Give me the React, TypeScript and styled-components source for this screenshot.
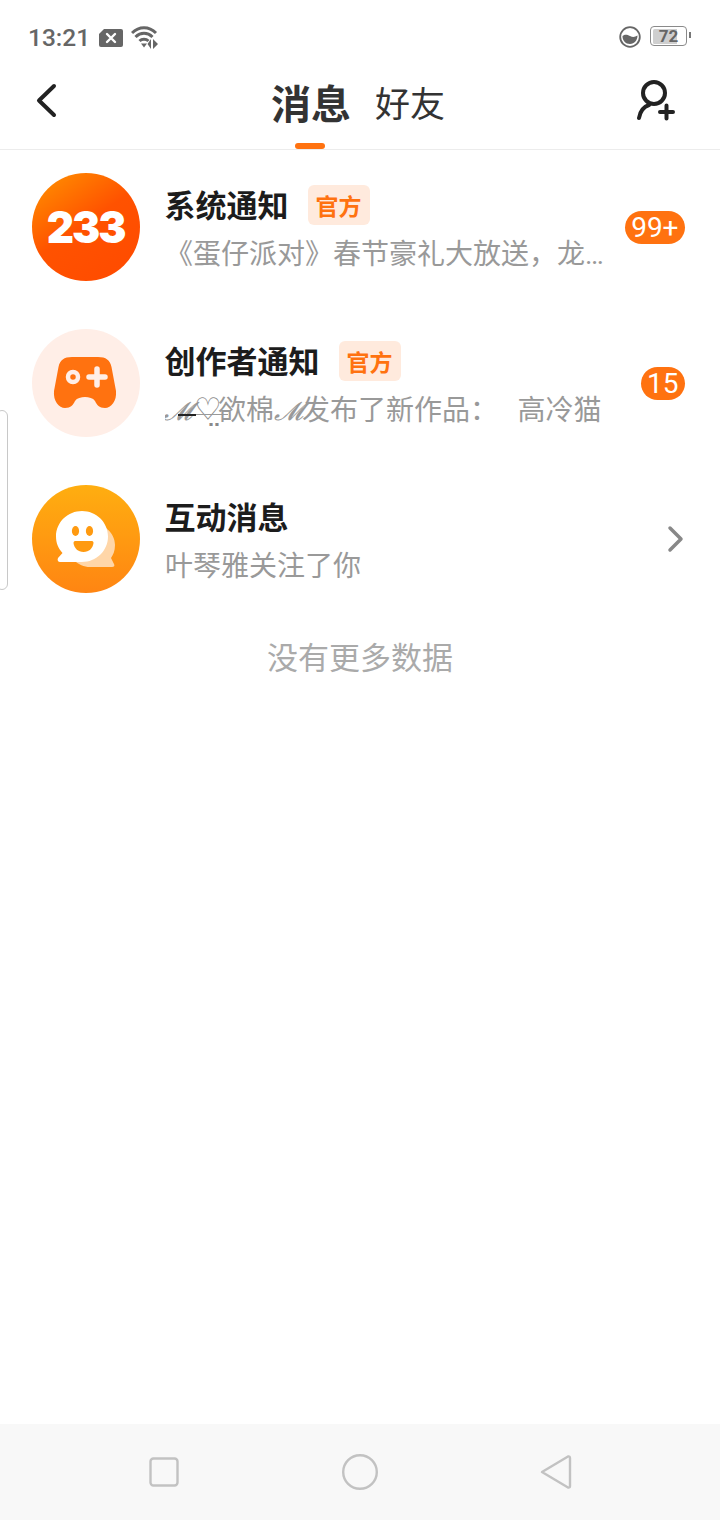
import styled, { createGlobalStyle } from "styled-components";

const orange = "#ff7210";
const cjk = `"Noto Sans CJK SC", "Noto Sans", sans-serif`;

const GlobalStyle = createGlobalStyle`
    html, body {
        margin: 0;
        padding: 0;
        background: #fff;
    }
    * {
        box-sizing: border-box;
    }
`;

const Page = styled.div`
    position: relative;
    display: flex;
    flex-direction: column;
    width: 720px;
    height: 1520px;
    overflow: hidden;
    background: #fff;
    font-family: ${cjk};
`;

const StatusBar = styled.div`
    display: flex;
    align-items: center;
    justify-content: space-between;
    height: 72px;
    padding: 3px 33px 0 28px;
    color: #666;
`;

const StatusGroup = styled.div`
    display: flex;
    align-items: center;
`;

const Clock = styled.span`
    font-family: Roboto, sans-serif;
    font-size: 24.500px;
    font-weight: 500;
    margin-right: 9px;
`;

const Battery = styled.div`
    position: relative;
    display: flex;
    align-items: center;
    justify-content: center;
    width: 37px;
    height: 20px;
    margin: -3px 0 0 9px;
    border: 1.5px solid #8a8a8a;
    border-radius: 4px;
    background: linear-gradient(90deg, #cfcfcf 0 72%, #fff 72%);
    background-clip: content-box;
    padding: 1.5px;
    font-family: Roboto, sans-serif;
    font-size: 17px;
    font-weight: 700;
    color: #666;

    &::after {
        content: "";
        position: absolute;
        right: -5px;
        top: 5px;
        width: 2px;
        height: 6px;
        background: #777;
    }
`;

const NavHeader = styled.header`
    position: relative;
    display: flex;
    align-items: center;
    justify-content: space-between;
    height: 78px;
    padding: 0 45px 20px 36px;
    border-bottom: 1px solid #ececec;
`;

const Tabs = styled.div`
    position: absolute;
    left: 271px;
    top: 0;
    bottom: 0;
    display: flex;
    align-items: center;
    gap: 24px;
    padding-bottom: 18px;
`;

const Tab = styled.span<{ $active?: boolean }>`
    position: relative;
    height: 60px;
    line-height: 60px;
    color: #333;
    font-size: ${(p) => (p.$active ? "40px" : "35px")};
    font-weight: ${(p) => (p.$active ? 700 : 400)};

    ${(p) =>
        p.$active &&
        `&::after {
            content: "";
            position: absolute;
            left: 24px;
            bottom: -17px;
            width: 30px;
            height: 6px;
            border-radius: 3px;
            background: ${orange};
        }`}
`;

const List = styled.div`
    display: flex;
    flex-direction: column;
    margin-top: -1px;
`;

const Row = styled.div`
    display: flex;
    align-items: center;
    height: 156px;
    padding: 0 35px 0 32px;
`;

const Avatar = styled.div<{ $bg: string }>`
    display: flex;
    align-items: center;
    justify-content: center;
    flex: none;
    width: 108px;
    height: 108px;
    border-radius: 50%;
    background: ${(p) => p.$bg};
    overflow: hidden;
`;

const LogoText = styled.span`
    font-family: Inter, Roboto, sans-serif;
    font-size: 44px;
    font-weight: 900;
    color: #fff;
    letter-spacing: -2px;
    transform: scaleX(0.96);
`;

const RowBody = styled.div`
    flex: 1;
    display: flex;
    flex-direction: column;
    gap: 10px;
    min-width: 0;
    margin-left: 25px;
    padding-top: 4px;
`;

const TitleLine = styled.div`
    display: flex;
    align-items: center;
    gap: 19px;
    height: 42px;
`;

const Name = styled.span`
    color: #1c1c1c;
    font-size: 31px;
    font-weight: 700;
    line-height: 42px;
    margin-left: -0.500px;
`;

const Tag = styled.span`
    width: 62px;
    height: 40px;
    margin-top: 2px;
    border-radius: 6px;
    background: #ffeadd;
    color: ${orange};
    font-size: 23px;
    font-weight: 700;
    line-height: 40px;
    text-align: center;
`;

const Preview = styled.div`
    width: 445px;
    overflow: hidden;
    white-space: nowrap;
    text-overflow: ellipsis;
    color: #999;
    font-family: Roboto, ${cjk};
    font-size: 28px;
    line-height: 40px;
`;

const ScriptM = styled.span`
    font-family: "DejaVu Serif", "DejaVu Sans", serif;
    font-size: 26px;
    font-style: italic;
    font-weight: 400;
    letter-spacing: -1px;
`;

const Heart = styled.span`
    margin-left: 3px;
    font-family: "DejaVu Sans", serif;
    font-size: 31px;
    line-height: 1;
    color: #8a8a8a;
`;

const NameDecor = styled.span`
    position: relative;
    display: inline-block;
    width: 55px;
    margin-left: -2px;
    color: #999;

    &::before {
        content: "";
        position: absolute;
        left: 15px;
        top: 23px;
        width: 18px;
        height: 2px;
        background: #222;
    }

    &::after {
        content: "";
        position: absolute;
        left: 33px;
        top: 23px;
        width: 32px;
        height: 1px;
        background: #999;
    }
`;

const Badge = styled.span`
    flex: none;
    height: 33px;
    padding: 0 6.500px;
    border-radius: 17px;
    background: ${orange};
    color: #fff;
    font-family: Roboto, sans-serif;
    font-size: 28px;
    line-height: 33px;
`;

const NoMore = styled.div`
    margin-top: 17px;
    color: #aaa;
    font-size: 31px;
    line-height: 44px;
    text-align: center;
`;

const SideHandle = styled.div`
    position: absolute;
    left: -4px;
    top: 410px;
    width: 12px;
    height: 180px;
    border: 1px solid #c8c8c8;
    border-radius: 6px;
    background: #fff;
`;

const BottomBar = styled.nav`
    display: flex;
    align-items: center;
    justify-content: center;
    height: 96px;
    margin-top: auto;
    background: #f8f8f8;
`;

const BottomKey = styled.div`
    display: flex;
    justify-content: center;
    width: 196px;
`;

function BackIcon() {
    return (
        <svg width="22" height="36" viewBox="0 0 22 36" fill="none" stroke="#222" strokeWidth="4" strokeLinecap="round" strokeLinejoin="round">
            <path d="M18 3 3 17.500 18 32" />
        </svg>
    );
}

function AddFriendIcon() {
    return (
        <svg width="38" height="42" viewBox="0 0 38 42" fill="none" stroke="#222" strokeWidth="4" strokeLinecap="round">
            <circle cx="17" cy="13" r="11" />
            <path d="M12 25C6 27 3 32 2 38" />
            <path d="M23 32H36M29.500 25.500V38.500" />
        </svg>
    );
}

function SimIcon() {
    return (
        <svg width="24" height="18" viewBox="0 0 24 18">
            <path d="M5 0H22Q24 0 24 2V16Q24 18 22 18H2Q0 18 0 16V5Z" fill="#666" />
            <path d="M8 5 16 13M16 5 8 13" stroke="#fff" strokeWidth="2.400" strokeLinecap="round" />
        </svg>
    );
}

function WifiIcon() {
    return (
        <svg width="28" height="24" viewBox="0 0 28 24" fill="none" style={{ marginLeft: 8 }}>
            <path d="M1 7C8 0 18 0 25 7" stroke="#666" strokeWidth="3" />
            <path d="M4.500 11C9.500 6 16.500 6 21.500 11" stroke="#666" strokeWidth="3" />
            <path d="M8.500 15C11 12.500 15 12.500 17.500 15" stroke="#666" strokeWidth="3" />
            <path d="M10 17.500H16L13 21.500Z" fill="#666" />
            <path d="M20 13V23L16.500 18ZM22 13V23L27 18Z" fill="#666" />
        </svg>
    );
}

function DataSaverIcon() {
    return (
        <svg width="22" height="22" viewBox="0 0 22 22" style={{ marginTop: -1 }}>
            <circle cx="11" cy="11" r="9.800" fill="#fff" stroke="#666" strokeWidth="1.800" />
            <path d="M3.500 10C6 8 8 8.500 11 10S16 11 18.500 9.500C18.500 14 15.500 18 11 18S3.500 14.500 3.500 10Z" fill="#666" />
        </svg>
    );
}

function GamepadIcon() {
    return (
        <svg width="108" height="108" viewBox="0 0 108 108">
            <path
                d="M40 28H66C74 28 78 31 79.500 38L84 62C85 72 79 79 73 79C67 79 65 76 63 72C61 69 57 68 53 68C49 68 45 69 43 72C41 76 39 79 33 79C27 79 21 72 22 62L26.500 38C28 31 32 28 40 28Z"
                fill={orange}
            />
            <circle cx="41" cy="48" r="5" fill={orange} stroke="#ffeee7" strokeWidth="4.500" />
            <path d="M57 48H73M65 40V56" stroke="#ffeee7" strokeWidth="5.500" strokeLinecap="round" />
        </svg>
    );
}

function BubbleIcon() {
    return (
        <svg width="108" height="108" viewBox="0 0 108 108">
            <path
                d="M58 38C72 38 83 48 83 60C83 66 81 70 79 73L82 79C83 81 82 82 80 82H58C46 82 36 72 36 60C36 48 46 38 58 38Z"
                fill="#ffd6a8"
            />
            <path
                d="M50 26C64 26 76 37 76 51.500C76 66 64 77 50 77H28C26 77 25 75 26 73L30.500 68C26 63 24 58 24 51.500C24 37 36 26 50 26Z"
                fill="#fff"
            />
            <ellipse cx="43.500" cy="46" rx="3.600" ry="5" fill="#ff9a10" />
            <ellipse cx="57.500" cy="46" rx="3.600" ry="5" fill="#ff9a10" />
            <path d="M43 56H60C61 56 61.500 57 61.500 58C61 63 57 67 51.500 67C46 67 42 63 41.500 58C41.500 57 42 56 43 56Z" fill="#ff9a10" />
        </svg>
    );
}

function ChevronIcon() {
    return (
        <svg width="18" height="28" viewBox="0 0 18 28" fill="none" stroke="#888" strokeWidth="3.500" strokeLinecap="round" strokeLinejoin="round">
            <path d="M3 3 14 14 3 25" />
        </svg>
    );
}

function App(): JSX.Element {
    return (
        <Page>
            <GlobalStyle />
            <StatusBar>
                <StatusGroup>
                    <Clock>13:21</Clock>
                    <SimIcon />
                    <WifiIcon />
                </StatusGroup>
                <StatusGroup>
                    <DataSaverIcon />
                    <Battery>72</Battery>
                </StatusGroup>
            </StatusBar>

            <NavHeader>
                <BackIcon />
                <Tabs>
                    <Tab $active>消息</Tab>
                    <Tab>好友</Tab>
                </Tabs>
                <AddFriendIcon />
            </NavHeader>

            <List>
                <Row>
                    <Avatar $bg="linear-gradient(145deg, #ff8a00 8%, #ff5200 48%, #ff4a00)">
                        <LogoText>233</LogoText>
                    </Avatar>
                    <RowBody>
                        <TitleLine>
                            <Name>系统通知</Name>
                            <Tag>官方</Tag>
                        </TitleLine>
                        <Preview>《蛋仔派对》春节豪礼大放送，龙年福利抢先领</Preview>
                    </RowBody>
                    <Badge>99+</Badge>
                </Row>
                <Row>
                    <Avatar $bg="#ffeee7">
                        <GamepadIcon />
                    </Avatar>
                    <RowBody>
                        <TitleLine>
                            <Name>创作者通知</Name>
                            <Tag>官方</Tag>
                        </TitleLine>
                        <Preview>
                            <NameDecor><ScriptM>𝓜</ScriptM><Heart>♡̤</Heart></NameDecor>
                            欲棉<ScriptM>𝓜</ScriptM>发布了新作品：&nbsp;&nbsp;&thinsp;高冷猫
                        </Preview>
                    </RowBody>
                    <Badge>15</Badge>
                </Row>
                <Row>
                    <Avatar $bg="linear-gradient(180deg, #ffae10, #ff8512)">
                        <BubbleIcon />
                    </Avatar>
                    <RowBody>
                        <TitleLine>
                            <Name>互动消息</Name>
                        </TitleLine>
                        <Preview>叶琴雅关注了你</Preview>
                    </RowBody>
                    <ChevronIcon />
                </Row>
            </List>

            <NoMore>没有更多数据</NoMore>
            <SideHandle />

            <BottomBar>
                <BottomKey>
                    <svg width="30" height="30" viewBox="0 0 30 30" fill="none" stroke="#c2c2c2" strokeWidth="2.400">
                        <rect x="1.500" y="1.500" width="27" height="27" rx="3" />
                    </svg>
                </BottomKey>
                <BottomKey>
                    <svg width="36" height="36" viewBox="0 0 36 36" fill="none" stroke="#c2c2c2" strokeWidth="2.400">
                        <circle cx="18" cy="18" r="16.800" />
                    </svg>
                </BottomKey>
                <BottomKey>
                    <svg width="32" height="36" viewBox="0 0 32 36" fill="none" stroke="#c2c2c2" strokeWidth="2.400" strokeLinejoin="round">
                        <path d="M2 18 28 2.500Q30 2 30 4V32Q30 34 28 33.500Z" />
                    </svg>
                </BottomKey>
            </BottomBar>
        </Page>
    );
}

export default App;
